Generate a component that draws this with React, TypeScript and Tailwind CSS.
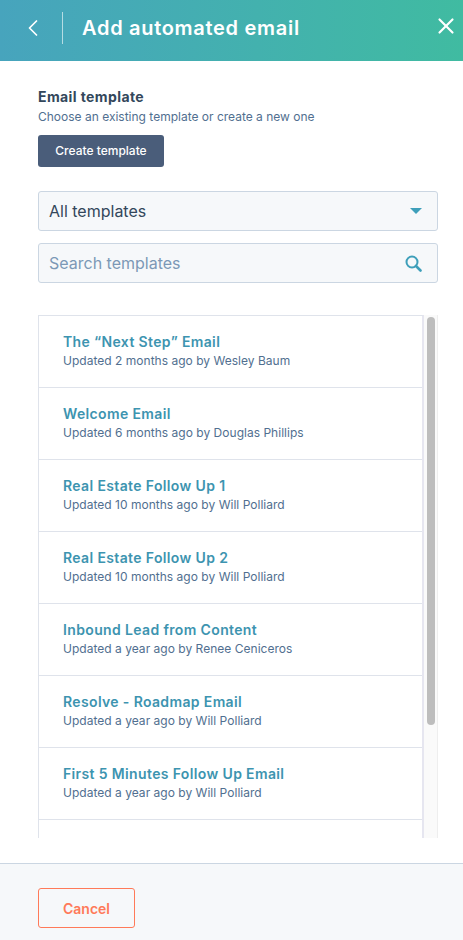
import { ChevronLeft, X } from "lucide-react";

const rows = [
  ["The “Next Step” Email", "Updated 2 months ago by Wesley Baum"],
  ["Welcome Email", "Updated 6 months ago by Douglas Phillips"],
  ["Real Estate Follow Up 1", "Updated 10 months ago by Will Polliard"],
  ["Real Estate Follow Up 2", "Updated 10 months ago by Will Polliard"],
  ["Inbound Lead from Content", "Updated a year ago by Renee Ceniceros"],
  ["Resolve - Roadmap Email", "Updated a year ago by Will Polliard"],
  ["First 5 Minutes Follow Up Email", "Updated a year ago by Will Polliard"],
];

export default function App() {
  return (
    <div className="flex h-[940px] w-[463px] flex-col overflow-hidden bg-white font-['Inter',sans-serif] text-[#33475b]">
      <header className="flex h-[61px] shrink-0 items-center bg-gradient-to-r from-[#47a4bd] to-[#40bba1] pb-[6px] text-white">
        <button className="ml-[19px] flex w-[28px] justify-center">
          <ChevronLeft size={28} strokeWidth={1.5} />
        </button>
        <div className="ml-[15px] h-[32px] w-px bg-white/60" />
        <h1 className="ml-[19px] text-[20px] font-semibold tracking-[0.7px]">Add automated email</h1>
        <button className="ml-auto mr-[4px] mb-[4px]">
          <X size={26} strokeWidth={2} />
        </button>
      </header>
      <main className="flex min-h-0 flex-1 flex-col pl-[38px] pr-[25px] pt-[27px]">
        <div className="text-[14px] font-bold leading-[18px] tracking-[0.4px]">Email template</div>
        <div className="mt-[2px] text-[12px] leading-[18px] text-[#516f90]">Choose an existing template or create a new one</div>
        <button className="mt-[9px] h-[32px] w-[126px] rounded-[3px] bg-[#4a5d7a] text-[12px] font-medium text-white">Create template</button>
        <div className="mt-[24px] flex h-[40px] items-center justify-between rounded-[3px] border border-[#cbd6e2] bg-[#f6f8fa] px-[10px] text-[16px]">
          <span>All templates</span>
          <span className="mr-[5px] h-0 w-0 border-x-[6px] border-t-[6px] border-x-transparent border-t-[#3e9fba]" />
        </div>
        <div className="mt-[12px] flex h-[40px] items-center justify-between rounded-[3px] border border-[#cbd6e2] bg-[#f6f8fa] px-[10px] text-[16px] text-[#7c98b6]">
          <span>Search templates</span>
          <svg width="17" height="17" viewBox="0 0 17 17" fill="none" stroke="#3e9fba" className="mr-[5px]">
            <circle cx="7" cy="7" r="5.5" strokeWidth="2" />
            <path d="M11 11 L15.5 15.5" strokeWidth="2.6" strokeLinecap="round" />
          </svg>
        </div>
        <div className="mt-[32px] flex h-[523px] overflow-hidden">
          <ul className="min-w-0 flex-1 border-x-2 border-t-[1.5px] border-l-[1px] border-[#dfe3eb] border-r-[#e6e6f0]">
            {rows.map(([title, sub]) => (
              <li key={title} className="flex h-[72px] flex-col justify-center border-b border-[#dfe3eb] pb-[2px] pl-[24px]">
                <div className="text-[14px] font-semibold leading-[20px] tracking-[0.36px] text-[#3d94b0]">{title}</div>
                <div className="text-[12px] leading-[18px] tracking-[0.02px] text-[#516f90]">{sub}</div>
              </li>
            ))}
          </ul>
          <div className="w-[14px] shrink-0 border-r border-[#eeeeee] bg-[#fafafa] pl-[3px] pt-[2px]">
            <div className="h-[408px] w-[8px] rounded-full bg-[#bdbdbd]" />
          </div>
        </div>
      </main>
      <footer className="flex h-[77px] shrink-0 items-start border-t border-[#cbd6e2] bg-[#f6f8fa] px-[38px] pt-[24px]">
        <button className="h-[40px] w-[97px] rounded-[3px] border border-[#ff7a59] text-[14px] font-semibold text-[#ff7a59]">Cancel</button>
      </footer>
    </div>
  );
}
